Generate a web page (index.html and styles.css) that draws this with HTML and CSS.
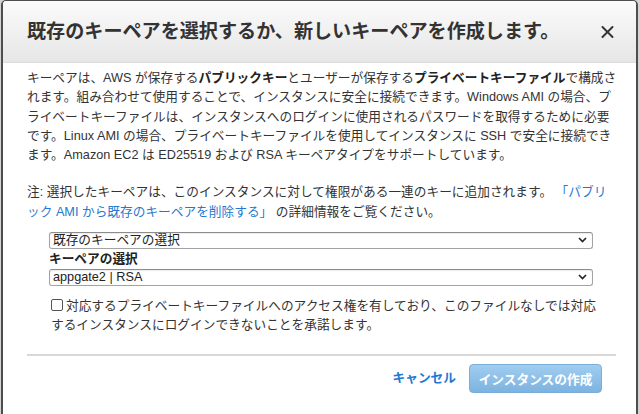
FILE: index.html
```html
<!DOCTYPE html>
<html lang="ja">
<head>
<meta charset="utf-8">
<link rel="stylesheet" href="styles.css">
</head>
<body>
<div class="modal">
  <div class="modal-header">
    <h1 class="title">既存のキーペアを選択するか、新しいキーペアを作成します。</h1>
    <button class="close" aria-label="close">
      <svg width="13" height="12" viewBox="0 0 13 12"><path d="M1.5 1 L11.5 11 M11.5 1 L1.5 11" stroke="#333" stroke-width="1.9" fill="none" stroke-linecap="round"/></svg>
    </button>
  </div>
  <div class="modal-body">
    <p class="desc">キーペアは、AWS が保存する<b>パブリックキー</b>とユーザーが保存する<b>プライベートキーファイル</b>で構成さ<br>れます。組み合わせて使用することで、インスタンスに安全に接続できます。Windows AMI の場合、プ<br>ライベートキーファイルは、インスタンスへのログインに使用されるパスワードを取得するために必要<br>です。Linux AMI の場合、プライベートキーファイルを使用してインスタンスに SSH で安全に接続でき<br>ます。Amazon EC2 は ED25519 および RSA キーペアタイプをサポートしています。</p>
    <p class="note">注: 選択したキーペアは、このインスタンスに対して権限がある一連のキーに追加されます。 <a class="link">「パブリ<br>ック AMI から既存のキーペアを削除する」</a> の詳細情報をご覧ください。</p>
    <div class="form">
      <div class="select"><span>既存のキーペアの選択</span><svg width="9" height="6" viewBox="0 0 9 6"><path d="M1 1 L4.5 4.5 L8 1" stroke="#222" stroke-width="1.6" fill="none"/></svg></div>
      <div class="label">キーペアの選択</div>
      <div class="select"><span>appgate2 | RSA</span><svg width="9" height="6" viewBox="0 0 9 6"><path d="M1 1 L4.5 4.5 L8 1" stroke="#222" stroke-width="1.6" fill="none"/></svg></div>
      <p class="ack"><span class="checkbox"></span>対応するプライベートキーファイルへのアクセス権を有しており、このファイルなしでは対応<br>するインスタンスにログインできないことを承諾します。</p>
    </div>
    <div class="rule"></div>
    <div class="footer">
      <a class="cancel">キャンセル</a>
      <button class="primary">インスタンスの作成</button>
    </div>
  </div>
</div>
</body>
</html>
```

FILE: styles.css
```css
html, body {
  margin: 0;
  padding: 0;
}
body {
  background: #d4d4d4;
  width: 640px;
  height: 414px;
  overflow: hidden;
  font-family: "Liberation Sans", "Noto Sans CJK JP", sans-serif;
  color: #333;
}
.modal {
  margin-left: 1px;
  width: 637px;
  height: 420px;
  box-sizing: border-box;
  background: #fff;
  border: 2px solid #4e4e4e;
  border-top-width: 1px;
  border-radius: 5px 5px 0 0;
  overflow: hidden;
}
.modal-header {
  height: 62px;
  box-sizing: border-box;
  display: flex;
  align-items: center;
  justify-content: space-between;
  padding: 0 22px 0 24px;
  background: linear-gradient(#fbfbfb, #e6e6e6);
  border-bottom: 1px solid #dcdcdc;
}
.title {
  margin: 0;
  font-size: 19.1px;
  font-weight: bold;
  color: #333;
  white-space: nowrap;
  line-height: 24px;
}
.close {
  border: 0;
  background: none;
  padding: 0;
  margin: 1px 0 0 0;
  display: flex;
}
.modal-body {
  padding: 6px 20px 0 24px;
  font-size: 12.7px;
  line-height: 19.25px;
}
.desc, .note, .ack {
  margin: 0;
  white-space: nowrap;
}
.desc b {
  font-weight: bold;
  color: #222;
}
.note {
  margin-top: 18px;
}
.link {
  color: #2479cf;
}
.form {
  margin: 10px 23px 0 22px;
}
.select {
  height: 17px;
  box-sizing: border-box;
  border: 1px solid #a3a3a3;
  border-top-color: #8c8c8c;
  border-radius: 3px;
  background: #fff;
  display: flex;
  align-items: center;
  justify-content: space-between;
  padding: 0 5px 0 3px;
  color: #222;
  line-height: 15px;
  box-shadow: inset 0 1px 1px rgba(0,0,0,0.08);
}
.label {
  font-weight: bold;
  line-height: 20px;
  color: #222;
}
.ack {
  margin-top: 11px;
  margin-left: 2px;
}
.checkbox {
  display: inline-block;
  width: 10px;
  height: 10px;
  border: 1px solid #555;
  border-radius: 2px;
  margin-right: 3px;
  vertical-align: -1px;
}
.rule {
  height: 2px;
  background: #d8d8d8;
  margin-top: 19px;
}
.footer {
  display: flex;
  justify-content: flex-end;
  align-items: center;
  gap: 13px;
  padding: 8px 14px 0 0;
}
.cancel {
  color: #1f78d1;
  font-weight: bold;
}
.primary {
  height: 29px;
  width: 133px;
  box-sizing: border-box;
  border: 1px solid #7badd9;
  border-radius: 4px;
  background: linear-gradient(#a0cdf1, #7db3e0);
  color: #fff;
  font-family: "Liberation Sans", "Noto Sans CJK JP", sans-serif;
  font-size: 12.7px;
  font-weight: bold;
  padding: 0;
}
```
